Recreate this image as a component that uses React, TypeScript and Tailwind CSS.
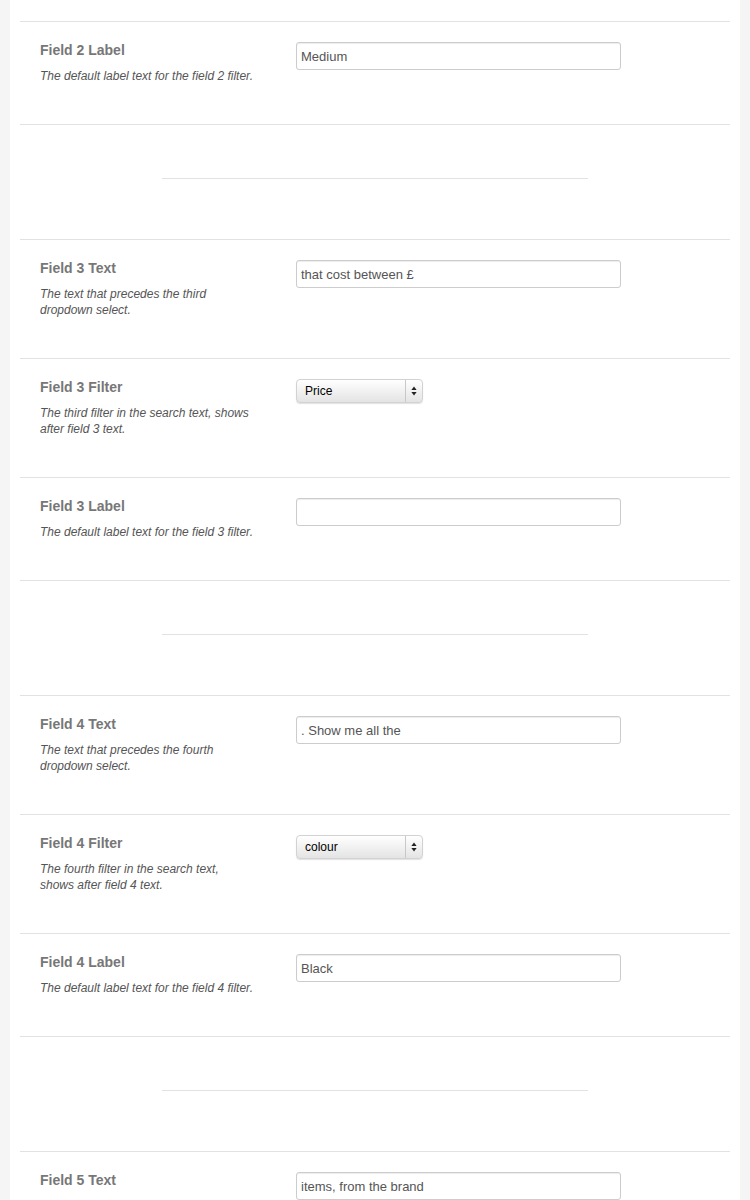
import type { ReactNode } from 'react'

type Row =
  | { kind: 'text'; title: string; desc: string; value: string }
  | { kind: 'select'; title: string; desc: string; value: string }
  | { kind: 'divider' }

const rows: Row[] = [
  { kind: 'text', title: 'Field 2 Label', desc: 'The default label text for the field 2 filter.', value: 'Medium' },
  { kind: 'divider' },
  { kind: 'text', title: 'Field 3 Text', desc: 'The text that precedes the third dropdown select.', value: 'that cost between £' },
  { kind: 'select', title: 'Field 3 Filter', desc: 'The third filter in the search text, shows after field 3 text.', value: 'Price' },
  { kind: 'text', title: 'Field 3 Label', desc: 'The default label text for the field 3 filter.', value: '' },
  { kind: 'divider' },
  { kind: 'text', title: 'Field 4 Text', desc: 'The text that precedes the fourth dropdown select.', value: '. Show me all the' },
  { kind: 'select', title: 'Field 4 Filter', desc: 'The fourth filter in the search text, shows after field 4 text.', value: 'colour' },
  { kind: 'text', title: 'Field 4 Label', desc: 'The default label text for the field 4 filter.', value: 'Black' },
  { kind: 'divider' },
  { kind: 'text', title: 'Field 5 Text', desc: 'The text that precedes the fifth dropdown select.', value: 'items, from the brand' },
]

function FakeSelect({ value }: { value: string }) {
  return (
    <div className="flex h-[24px] w-[127px] items-center rounded-[4px] border border-[#d2d2d2] bg-gradient-to-b from-white to-[#e4e4e4] shadow-[0_1px_1px_rgba(0,0,0,0.12)]">
      <span className="flex-1 pl-[8px] text-[12px] text-black">{value}</span>
      <span className="flex h-full w-[17px] items-center justify-center border-l border-[#c8c8c8]">
        <svg width="6" height="10" viewBox="0 0 6 10">
          <path d="M3 0.5 L5.6 4 H0.4 Z" fill="#222" />
          <path d="M3 9.5 L5.6 6 H0.4 Z" fill="#222" />
        </svg>
      </span>
    </div>
  )
}

function Field({ title, desc, children }: { title: string; desc: string; children: ReactNode }) {
  return (
    <div className="flex border-t border-[#e2e2e2] px-[20px] pt-[20px] pb-[40px]">
      <div className="w-[256px] shrink-0">
        <div className="text-[14px] font-bold leading-[16px] text-[#777]">{title}</div>
        <p className="mt-[10px] w-[214px] text-[12px] italic leading-[16px] text-[#555]">{desc}</p>
      </div>
      <div>{children}</div>
    </div>
  )
}

export default function App() {
  return (
    <div className="min-h-[1200px] bg-[#f5f5f5] px-[10px] font-['Liberation_Sans',Arial,sans-serif]">
      <div className="min-h-[1200px] bg-white px-[10px] pt-[21px]">
        {rows.map((r, i) =>
          r.kind === 'divider' ? (
            <div key={i} className="flex h-[115px] justify-center border-t border-[#e2e2e2] pt-[53px]">
              <div className="h-px w-[426px] bg-[#e2e2e2]" />
            </div>
          ) : (
            <Field key={i} title={r.title} desc={r.desc}>
              {r.kind === 'text' ? (
                <input
                  readOnly
                  value={r.value}
                  className="h-[28px] w-[325px] rounded-[3px] border border-[#ccc] bg-white px-[4px] text-[13px] text-[#555] shadow-[inset_0_1px_1px_rgba(0,0,0,0.075)] outline-none"
                />
              ) : (
                <FakeSelect value={r.value} />
              )}
            </Field>
          ),
        )}
      </div>
    </div>
  )
}
